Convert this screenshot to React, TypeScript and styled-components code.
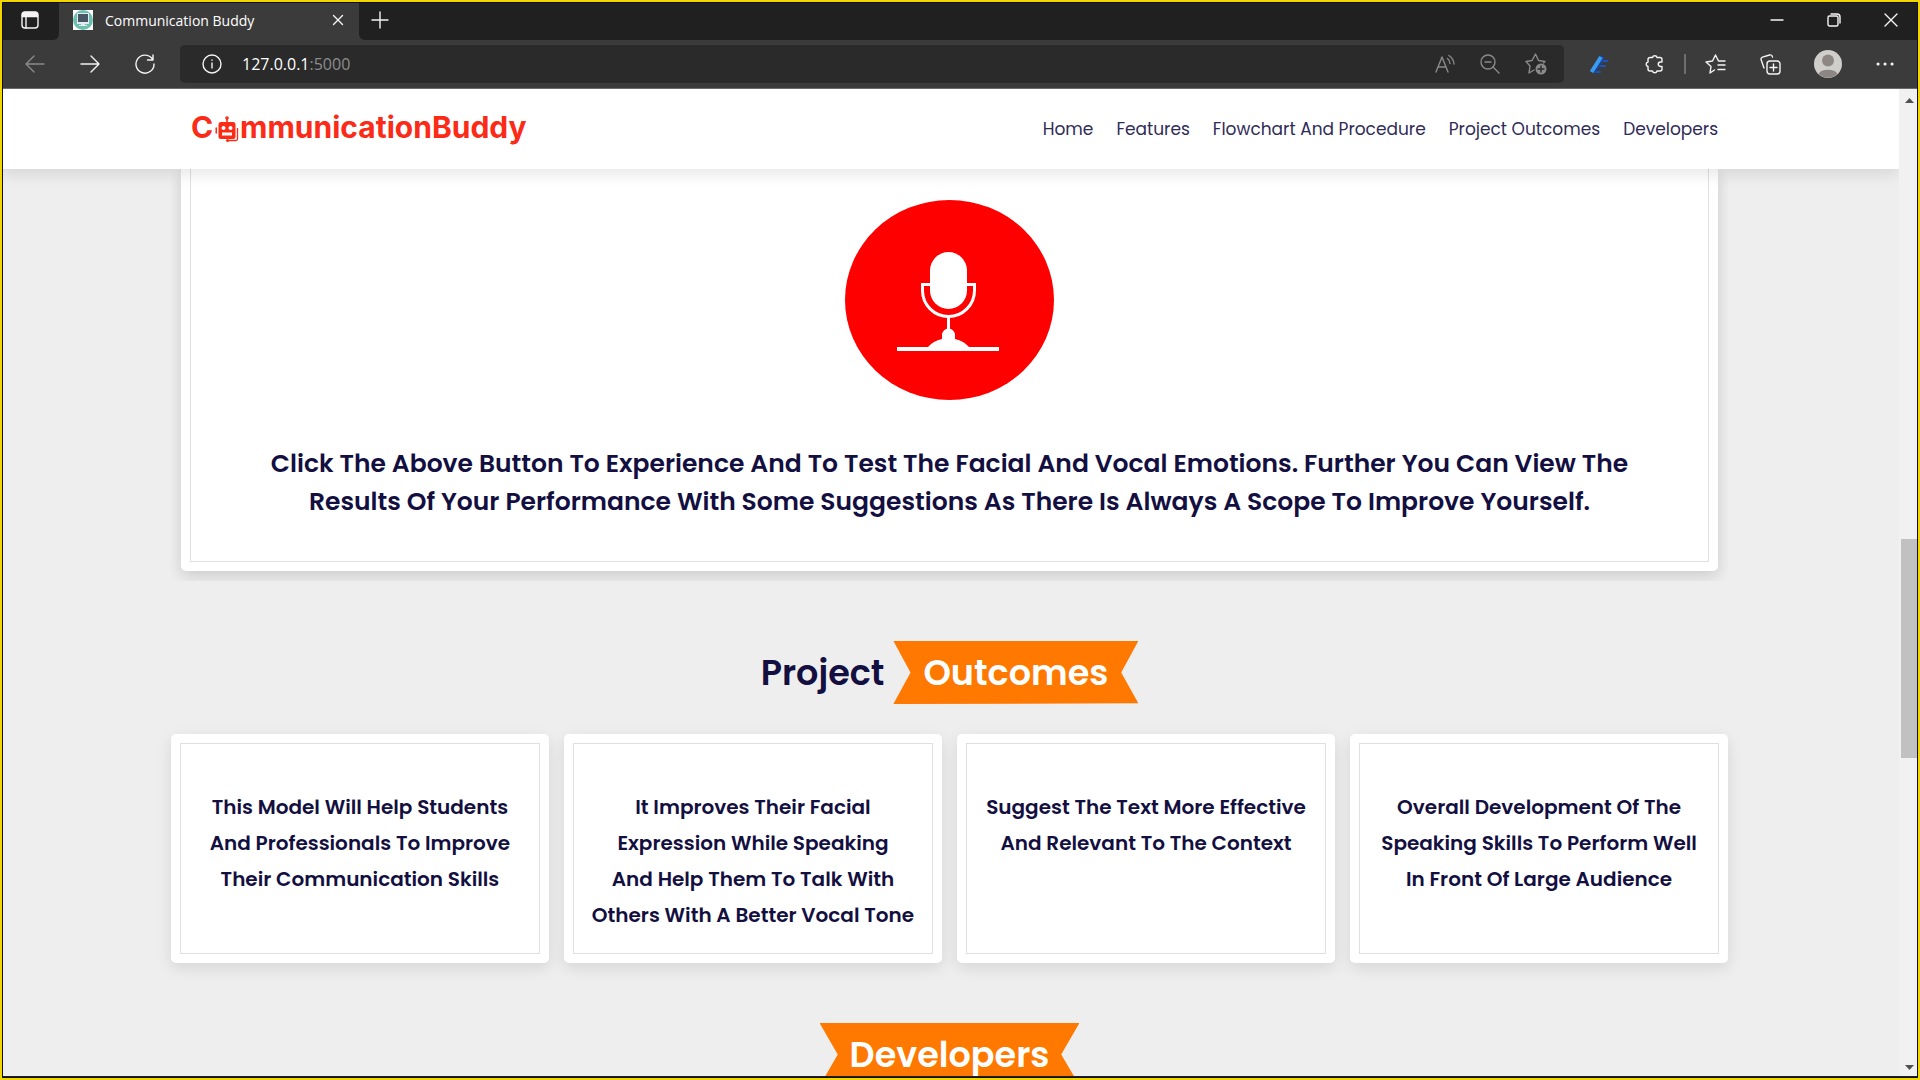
import React from "react";
import styled, { createGlobalStyle } from "styled-components";

const Global = createGlobalStyle`
  * { box-sizing: border-box; margin: 0; padding: 0; }
  body { background: #eee; font-family: Poppins, Inter, "Liberation Sans", sans-serif; }
  button { border: 0; background: none; font: inherit; color: inherit; cursor: pointer; }
  a { color: inherit; text-decoration: none; }
  svg { display: block; }
`;

/* The capture outline lies over the window, whose content runs to the screen's edge. */
const Frame = styled.div`
  position: relative;
  height: 100vh;
  display: flex;
  flex-direction: column;
  overflow: hidden;
  padding: 3px 0 4px;
  background: #202020;
  &::after {
    content: "";
    position: absolute;
    inset: 0;
    border: 2px solid #f2d600;
    box-shadow: inset 0 0 0 1px #111;
    pointer-events: none;
    z-index: 5;
  }
`;

/* browser chrome */
const TabBar = styled.div`
  display: flex;
  height: 37px;
  flex: none;
  background: #3b3b3b;
  color: #fff;
  font-family: "Segoe UI", "Open Sans", sans-serif;
`;
const TabActions = styled.div`
  width: 59px;
  display: grid;
  place-items: center;
  padding-bottom: 3px;
  background: #202020;
  border-bottom-right-radius: 6px;
`;
const Tab = styled.div`
  width: 300px;
  display: flex;
  align-items: center;
  gap: 12px;
  padding: 0 9px 3px 14px;
  font-size: 14px;
`;
const TabTitle = styled.span`
  flex: 1;
  white-space: nowrap;
`;
const TabRest = styled.div`
  flex: 1;
  display: flex;
  align-items: center;
  justify-content: space-between;
  padding-bottom: 3px;
  background: #202020;
  border-bottom-left-radius: 6px;
`;
const WindowButtons = styled.div`
  display: flex;
  padding-right: 1px;
`;
const IconButton = styled.button<{ $w?: number; $dim?: boolean }>`
  width: ${(p) => p.$w ?? 24}px;
  height: 34px;
  display: grid;
  place-items: center;
  color: ${(p) => (p.$dim ? "#8a8a8a" : "#f4f4f4")};
`;
const Toolbar = styled.div`
  display: flex;
  align-items: center;
  height: 49px;
  flex: none;
  background: #3b3b3b;
  border-bottom: 1px solid #6a6a6a;
  padding-left: 8px;
`;
const Address = styled.div`
  flex: 1;
  height: 38px;
  display: flex;
  align-items: center;
  margin-left: 8px;
  padding: 0 5px 0 10px;
  border-radius: 5px;
  background: #2a2a2a;
`;
const Url = styled.a`
  flex: 1;
  margin-left: 8px;
  font: 16px "Segoe UI", "Open Sans", sans-serif;
  color: #fff;
  span { color: #8d8d8d; }
`;
const Extensions = styled.div`
  display: flex;
  align-items: center;
  padding: 0 10px 0 6px;
`;
const Divider = styled.i`
  width: 2px;
  height: 20px;
  margin-left: 4px;
  background: #6e6e6e;
`;

/* viewport */
const Viewport = styled.div`
  flex: 1;
  min-height: 0;
  display: flex;
`;
const Page = styled.div`
  flex: 1;
  min-width: 0;
  overflow: hidden;
  background: #eee;
  color: #130f40;
`;
const ScrollBar = styled.div`
  width: 21px;
  display: flex;
  flex-direction: column;
  align-items: center;
  justify-content: space-between;
  padding: 9px 0 6px;
  background: #f1f1f1;
`;
const ScrollTrack = styled.div`
  flex: 1;
  align-self: stretch;
  display: grid;
  grid-template-rows: 436fr 220fr 307fr;
`;
const Thumb = styled.div`
  grid-row: 2;
  margin-left: 2px;
  background: #c1c1c1;
`;

const Header = styled.header`
  position: relative;
  z-index: 1;
  height: 80px;
  padding: 0 9%;
  display: flex;
  align-items: center;
  justify-content: space-between;
  background: #fff;
  box-shadow: 0 5px 15px rgba(0, 0, 0, 0.1);
`;
const Logo = styled.a`
  display: flex;
  align-items: center;
  margin-left: 20px;
  padding-bottom: 4px;
  font: 650 30px/36px Inter, sans-serif;
  color: #fb2b17;
  svg { margin: 3px 1px 0 2px; }
`;
const Nav = styled.nav`
  display: flex;
  gap: 23px;
  margin-right: 10px;
  font-size: 17px;
  color: #2f2b58;
`;

const Slider = styled.section`
  margin: 0 9%;
  padding: 0 10px 10px;
  overflow: hidden;
`;
const Slide = styled.div`
  background: #fff;
  border-radius: 0 0 5px 5px;
  padding: 0 9px 9px;
  box-shadow: 0 5px 15px rgba(0, 0, 0, 0.15);
`;
const SlideBody = styled.div`
  display: flex;
  flex-direction: column;
  align-items: center;
  gap: 45px;
  padding: 31px 70px 40px;
  border: solid #e0e0e0;
  border-width: 0 1px 1px;
  text-align: center;
`;
const MicButton = styled.button`
  width: 209px;
  height: 200px;
`;
const SlideText = styled.h3`
  font-size: 25px;
  line-height: 38px;
  font-weight: 600;
`;
const Heading = styled.h1`
  display: flex;
  justify-content: center;
  align-items: center;
  gap: 9px;
  font-size: 35px;
  line-height: 63px;
  font-weight: 600;
`;
const Ribbon = styled.span`
  padding: 0 30px;
  color: #fff;
  background: #ff7800;
  clip-path: polygon(100% 0, 93% 50%, 100% 99%, 0 100%, 7% 50%, 0 0);
`;
const Outcomes = styled.section`
  padding: 60px 9%;
`;
const Cards = styled.div`
  display: grid;
  grid-template-columns: repeat(4, 1fr);
  gap: 15px;
  margin-top: 30px;
`;
const Card = styled.article`
  padding: 55px 20px 30px;
  background: #fff;
  border-radius: 5px;
  box-shadow: 0 5px 15px rgba(0, 0, 0, 0.1);
  outline: 1px solid #e0e0e0;
  outline-offset: -10px;
  text-align: center;
`;
const CardText = styled.h3`
  font-size: 20px;
  line-height: 36px;
  font-weight: 600;
  white-space: pre-line;
`;

const Icon = ({ w = 20, h = w, children }: { w?: number; h?: number; children: React.ReactNode }) => (
  <svg width={w} height={h} viewBox={`0 0 ${w} ${h}`} fill="none" stroke="currentColor" strokeWidth={1.4} strokeLinecap="round" strokeLinejoin="round" aria-hidden="true">
    {children}
  </svg>
);

const outcomes = [
  "This Model Will Help Students And Professionals To Improve Their Communication Skills",
  "It Improves Their Facial Expression While Speaking\nAnd Help Them To Talk With Others With A Better Vocal Tone",
  "Suggest The Text More Effective And Relevant To The Context",
  "Overall Development Of The Speaking Skills To Perform Well\nIn Front Of Large Audience",
];
const links = ["Home", "Features", "Flowchart And Procedure", "Project Outcomes", "Developers"];

const Robot = () => (
  <svg width="24" height="26" viewBox="0 0 24 26" fill="#fb2b17" aria-hidden="true">
    <circle cx="12" cy="2" r="1.8" />
    <path d="M11.200 3h1.600v4h-1.600z" />
    <path fillRule="evenodd" d="M6 6h12a2.500 2.500 0 0 1 2.500 2.500v12A2.500 2.500 0 0 1 18 23H6a2.500 2.500 0 0 1-2.500-2.500v-12A2.500 2.500 0 0 1 6 6zm2.500 4a2 2 0 1 0 .01 0zm7 0a2 2 0 1 0 .01 0zM7 16.500v3h10v-3z" />
    <path d="M.5 11.500H2v6H.5z" />
    <path d="M22.500 12v11a1.500 1.500 0 0 1-1.500 1.500h-9" fill="none" stroke="#fb2b17" strokeWidth="1.300" />
    <circle cx="12.500" cy="24.400" r="1.500" />
  </svg>
);

const Mic = () => (
  <svg width="209" height="200" viewBox="0 0 209 200" aria-hidden="true">
    <ellipse cx="104.500" cy="100" rx="104.500" ry="100" fill="#f00" />
    <rect x="85" y="52" width="37" height="57" rx="18.500" fill="#fff" />
    <path d="M85 84.500h-7.500v6a26 26 0 0 0 52 0v-6H122" fill="none" stroke="#fff" strokeWidth="3" />
    <path d="M103.500 117v16" stroke="#fff" strokeWidth="3" />
    <path d="M97 139v-4a6.500 6.500 0 0 1 13 0v4q9 2 14 8h30v4H52v-4h31q5-6 14-8z" fill="#fff" />
  </svg>
);

export default function App() {
  return (
    <Frame>
      <Global />
      <TabBar>
        <TabActions>
          <IconButton aria-label="Tab actions">
            <Icon w={18}>
              <rect x="1" y="1" width="16" height="16" rx="3" />
              <path d="M1.500 4a2.500 2.500 0 0 1 2.500-2.500h10A2.500 2.500 0 0 1 16.500 4v1.500h-15z" fill="currentColor" />
              <path d="M5 6v11" />
            </Icon>
          </IconButton>
        </TabActions>
        <Tab>
          <svg width="20" height="20" viewBox="0 0 20 20" aria-hidden="true">
            <path d="M0 0h20v20H0z" fill="#fff" />
            <circle cx="10" cy="10" r="10" fill="#6fbfae" />
            <path d="M4 3h12v11H4z" fill="#e4ebf0" />
            <path d="M5 4h10v8H5z" fill="#4a5568" />
            <path d="M8 14h4v1h2v1H6v-1h2z" fill="#e4ebf0" />
          </svg>
          <TabTitle>Communication Buddy</TabTitle>
          <IconButton aria-label="Close tab">
            <Icon w={12}><path d="M1.500 1.500l9 9M10.500 1.500l-9 9" /></Icon>
          </IconButton>
        </Tab>
        <TabRest>
          <IconButton $w={42} aria-label="New tab">
            <Icon w={18}><path d="M9 1v16M1 9h16" /></Icon>
          </IconButton>
          <WindowButtons>
            <IconButton $w={57} aria-label="Minimize"><Icon w={14}><path d="M1 7h12" /></Icon></IconButton>
            <IconButton $w={57} aria-label="Restore">
              <Icon w={14}><rect x="1" y="3" width="10" height="10" rx="1.500" /><path d="M4 1h6a3 3 0 0 1 3 3v6" /></Icon>
            </IconButton>
            <IconButton $w={57} aria-label="Close"><Icon w={14}><path d="M1 1l12 12M13 1L1 13" /></Icon></IconButton>
          </WindowButtons>
        </TabRest>
      </TabBar>
      <Toolbar>
        <IconButton $w={54} $dim aria-label="Back"><Icon><path d="M19 10H1M9 2L1 10l8 8" /></Icon></IconButton>
        <IconButton $w={56} aria-label="Forward"><Icon><path d="M1 10h18M11 2l8 8-8 8" /></Icon></IconButton>
        <IconButton $w={54} aria-label="Refresh"><Icon><path d="M17 4.500A9 9 0 1 0 19 10M18 1v5h-5.500" /></Icon></IconButton>
        <Address>
          <IconButton $w={44} aria-label="Site information">
            <Icon><circle cx="10" cy="10" r="9" /><path d="M10 9v5M10 6v.2" /></Icon>
          </IconButton>
          <Url href="#home">127.0.0.1<span>:5000</span></Url>
          <IconButton $w={44} $dim aria-label="Read aloud">
            <Icon><path d="M1 18L7 3l6 15M3 13h8M12.500 4.500q2.500 2 2.500 5M14 1.500q4.500 3 5 8.500" /></Icon>
          </IconButton>
          <IconButton $w={45} $dim aria-label="Zoom out">
            <Icon><circle cx="8" cy="8" r="7" /><path d="M13 13l6 6M5 8h6" /></Icon>
          </IconButton>
          <IconButton $w={47} $dim aria-label="Add to favorites">
            <Icon w={22}>
              <path d="M9 17l-5 3 1-7-4-4.500 6-1L10.500 1l3 6.500 6.500 1-1.500 1.500" />
              <circle cx="16" cy="16" r="5.500" fill="currentColor" stroke="none" />
              <path d="M16 13v6M13 16h6" stroke="#2a2a2a" />
            </Icon>
          </IconButton>
        </Address>
        <Extensions>
          <IconButton $w={58} aria-label="Editor extension">
            <Icon>
              <path d="M13 7h5.500M11 12h5M6 18h5" stroke="#1b55b8" strokeWidth="2" />
              <path d="M4 18L13.500 2.500" stroke="#1747a0" strokeWidth="5" strokeLinecap="butt" />
              <path d="M2.500 18L12 3" stroke="#3a9bf0" strokeWidth="4" strokeLinecap="butt" />
            </Icon>
          </IconButton>
          <IconButton $w={52} aria-label="Extensions">
            <Icon><path d="M6 3.500h2.500a2.300 2.300 0 0 1 4.500 0h3a2 2 0 0 1 2 2V8h-1.500a2.200 2.200 0 0 0 0 4.500H18V15a2 2 0 0 1-2 2h-3a2.300 2.300 0 0 1-4.500 0H6a2 2 0 0 1-2-2v-2.500A2.300 2.300 0 0 1 4 8V5.500a2 2 0 0 1 2-2z" /></Icon>
          </IconButton>
          <Divider />
          <IconButton $w={58} aria-label="Favorites">
            <Icon w={21}><path d="M9.500 16L5 19l1-6.500L1 8l6.500-1L10.500 1l3 6h6.500M13 11h7M13 15.500h7" /></Icon>
          </IconButton>
          <IconButton $w={52} aria-label="Collections">
            <Icon w={21}><rect x="7" y="7" width="13" height="13" rx="3" /><path d="M13.500 10v7M10 13.500h7M4 14L1.200 6Q.5 4 2.500 3.200l7-2.200q2.500-.5 3 2" /></Icon>
          </IconButton>
          <IconButton $w={64} aria-label="Profile">
            <svg width="28" height="28" viewBox="0 0 28 28">
              <circle cx="14" cy="14" r="14" fill="#d0cecb" />
              <circle cx="14" cy="10.500" r="6" fill="#8c8784" />
              <path d="M4.500 24a10 6 0 0 1 19 0 14 14 0 0 1-19 0z" fill="#8c8784" />
            </svg>
          </IconButton>
          <IconButton $w={50} aria-label="Settings and more">
            <Icon w={18} h={4}><path d="M2 2h.1M9 2h.1M16 2h.1" strokeWidth="3" /></Icon>
          </IconButton>
        </Extensions>
      </Toolbar>
      <Viewport>
        <Page>
          <Header>
            <Logo href="#home" aria-label="CommunicationBuddy">
              <span>C</span><Robot /><span>mmunicationBuddy</span>
            </Logo>
            <Nav>
              {links.map((l) => <a key={l} href={"#" + l.toLowerCase().replace(/ /g, "-")}>{l}</a>)}
            </Nav>
          </Header>
          <Slider>
            <Slide>
              <SlideBody>
                <MicButton aria-label="Start recording"><Mic /></MicButton>
                <SlideText>
                  Click The Above Button To Experience And To Test The Facial And Vocal Emotions. Further You Can View The
                  Results Of Your Performance With Some Suggestions As There Is Always A Scope To Improve Yourself.
                </SlideText>
              </SlideBody>
            </Slide>
          </Slider>
          <Outcomes>
            <Heading>Project <Ribbon>Outcomes</Ribbon></Heading>
            <Cards>
              {outcomes.map((o) => <Card key={o}><CardText>{o}</CardText></Card>)}
            </Cards>
          </Outcomes>
          <Heading><Ribbon>Developers</Ribbon></Heading>
        </Page>
        <ScrollBar>
          <svg width="9" height="5" viewBox="0 0 9 5"><path d="M0 5L4.500 0 9 5z" fill="#505050" /></svg>
          <ScrollTrack><Thumb /></ScrollTrack>
          <svg width="9" height="5" viewBox="0 0 9 5"><path d="M0 0L4.500 5 9 0z" fill="#505050" /></svg>
        </ScrollBar>
      </Viewport>
    </Frame>
  );
}
